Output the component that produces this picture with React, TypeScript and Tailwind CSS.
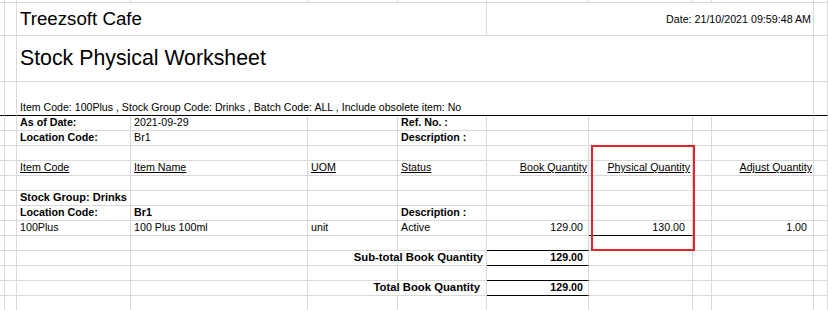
type Cell = {
  text?: string
  span?: number
  bold?: boolean
  underline?: boolean
  align?: 'left' | 'right'
  pad?: string
  size?: string
  dark?: boolean // black bottom rule under the cell
}

// column widths incl. the 1px grid line on the right
const COLS = 'grid-cols-[5px_12px_114px_177px_90px_89px_102px_104px_19px_102px_14px]'

const E: Cell = {}

const ROWS: { h: string; valign: 'end' | 'center'; cells: Cell[]; rule?: boolean }[] = [
  { h: 'h-[2px]', valign: 'end', cells: [E, E, E, E, E, E, E, E] },
  {
    h: 'h-[33px]',
    valign: 'center',
    cells: [
      { text: 'Treezsoft Cafe', span: 4, size: 'text-[18.7px]', pad: 'pl-[3px] pt-[1px]' },
      { text: 'Date: 21/10/2021 09:59:48 AM', span: 4, align: 'right', pad: 'pr-[2px] pb-[1px]' },
    ],
  },
  {
    h: 'h-[46px]',
    valign: 'center',
    cells: [{ text: 'Stock Physical Worksheet', span: 8, size: 'text-[21.3px]', pad: 'pl-[3px] pt-[1px]' }],
  },
  {
    h: 'h-[34px]',
    valign: 'end',
    rule: true,
    cells: [
      {
        text: 'Item Code: 100Plus , Stock Group Code: Drinks , Batch Code: ALL , Include obsolete item: No',
        span: 8,
        dark: true,
        size: 'text-[10.6px]',
      },
    ],
  },
  {
    h: 'h-[15px]',
    valign: 'end',
    cells: [{ text: 'As of Date:', bold: true }, { text: '2021-09-29' }, E, { text: 'Ref. No. :', bold: true }, E, E, E, E],
  },
  {
    h: 'h-[15px]',
    valign: 'end',
    cells: [{ text: 'Location Code:', bold: true }, { text: 'Br1' }, E, { text: 'Description :', bold: true }, E, E, E, E],
  },
  { h: 'h-[15px]', valign: 'end', cells: [E, E, E, E, E, E, E, E] },
  {
    h: 'h-[15px]',
    valign: 'end',
    cells: [
      { text: 'Item Code', underline: true },
      { text: 'Item Name', underline: true },
      { text: 'UOM', underline: true },
      { text: 'Status', underline: true },
      { text: 'Book Quantity', underline: true, align: 'right', pad: 'pr-[1px]' },
      { text: 'Physical Quantity', underline: true, align: 'right', pad: 'pr-[2px]' },
      E,
      { text: 'Adjust Quantity', underline: true, align: 'right', pad: 'pr-[1px]' },
    ],
  },
  { h: 'h-[15px]', valign: 'end', cells: [E, E, E, E, E, E, E, E] },
  {
    h: 'h-[15px]',
    valign: 'end',
    cells: [{ text: 'Stock Group: Drinks', bold: true, size: 'text-[11px]' }, E, E, E, E, E, E, E],
  },
  {
    h: 'h-[15px]',
    valign: 'end',
    cells: [
      { text: 'Location Code:', bold: true },
      { text: 'Br1', bold: true },
      E,
      { text: 'Description :', bold: true },
      E,
      E,
      E,
      E,
    ],
  },
  {
    h: 'h-[15px]',
    valign: 'end',
    cells: [
      { text: '100Plus' },
      { text: '100 Plus 100ml' },
      { text: 'unit' },
      { text: 'Active' },
      { text: '129.00', align: 'right', pad: 'pr-[5px]' },
      { text: '130.00', align: 'right', pad: 'pr-[7px]', dark: true },
      E,
      { text: '1.00', align: 'right', pad: 'pr-[6px]' },
    ],
  },
  { h: 'h-[15px]', valign: 'end', cells: [E, E, E, E, { dark: true }, E, E, E] },
  {
    h: 'h-[15px]',
    valign: 'end',
    cells: [
      E,
      E,
      { text: 'Sub-total Book Quantity', span: 2, bold: true, align: 'right', pad: 'pr-[3px]', size: 'text-[11.3px]' },
      { text: '129.00', bold: true, align: 'right', pad: 'pr-[5px]', dark: true },
      E,
      E,
      E,
    ],
  },
  { h: 'h-[15px]', valign: 'end', cells: [E, E, E, E, { dark: true }, E, E, E] },
  {
    h: 'h-[15px]',
    valign: 'end',
    cells: [
      E,
      E,
      { text: 'Total Book Quantity', span: 2, bold: true, align: 'right', pad: 'pr-[6px]', size: 'text-[11.3px]' },
      { text: '129.00', bold: true, align: 'right', pad: 'pr-[5px]', dark: true },
      E,
      E,
      E,
    ],
  },
  { h: 'h-[15px]', valign: 'end', cells: [E, E, E, E, E, E, E, E] },
]

const SPAN: Record<number, string> = {
  1: 'col-span-1',
  2: 'col-span-2',
  4: 'col-span-4',
  8: 'col-span-8',
}

function GridCell({ cell, valign, h }: { cell: Cell; valign: 'end' | 'center'; h: string }) {
  const right = cell.align === 'right'
  return (
    <div
      className={[
        SPAN[cell.span ?? 1],
        h,
        'flex overflow-visible whitespace-nowrap border-r border-b border-r-[#d9d9d9]',
        cell.dark ? 'border-b-black' : 'border-b-[#d9d9d9]',
        valign === 'end' ? 'items-end pb-[2px]' : 'items-center',
        right ? 'justify-end' : 'justify-start',
        cell.pad ?? (right ? 'pr-[2px]' : 'pl-[3px]'),
      ].join(' ')}
    >
      {cell.text && (
        <span
          className={[
            cell.size ?? 'text-[10.7px]',
            cell.size ? 'leading-none' : 'leading-[12px]',
            cell.bold ? 'font-bold' : 'font-normal',
            cell.underline ? 'underline underline-offset-[1px]' : '',
          ].join(' ')}
        >
          {cell.text}
        </span>
      )}
    </div>
  )
}

export default function App() {
  return (
    <div className="relative w-[828px] h-[310px] overflow-hidden bg-white text-black font-['Liberation_Sans',Arial,sans-serif]">
      <div className={`grid ${COLS}`}>
        {ROWS.map((row, r) => {
          const edge: Cell = row.rule ? { dark: true } : {}
          const cells = [edge, edge, ...row.cells, edge]
          return cells.map((cell, c) => <GridCell key={`${r}-${c}`} cell={cell} valign={row.valign} h={row.h} />)
        })}
      </div>

      {/* red highlight around the physical quantity column */}
      <div className="absolute left-[591px] top-[145px] w-[104px] h-[106px] border-2 border-[#e3222b] pointer-events-none" />
    </div>
  )
}
